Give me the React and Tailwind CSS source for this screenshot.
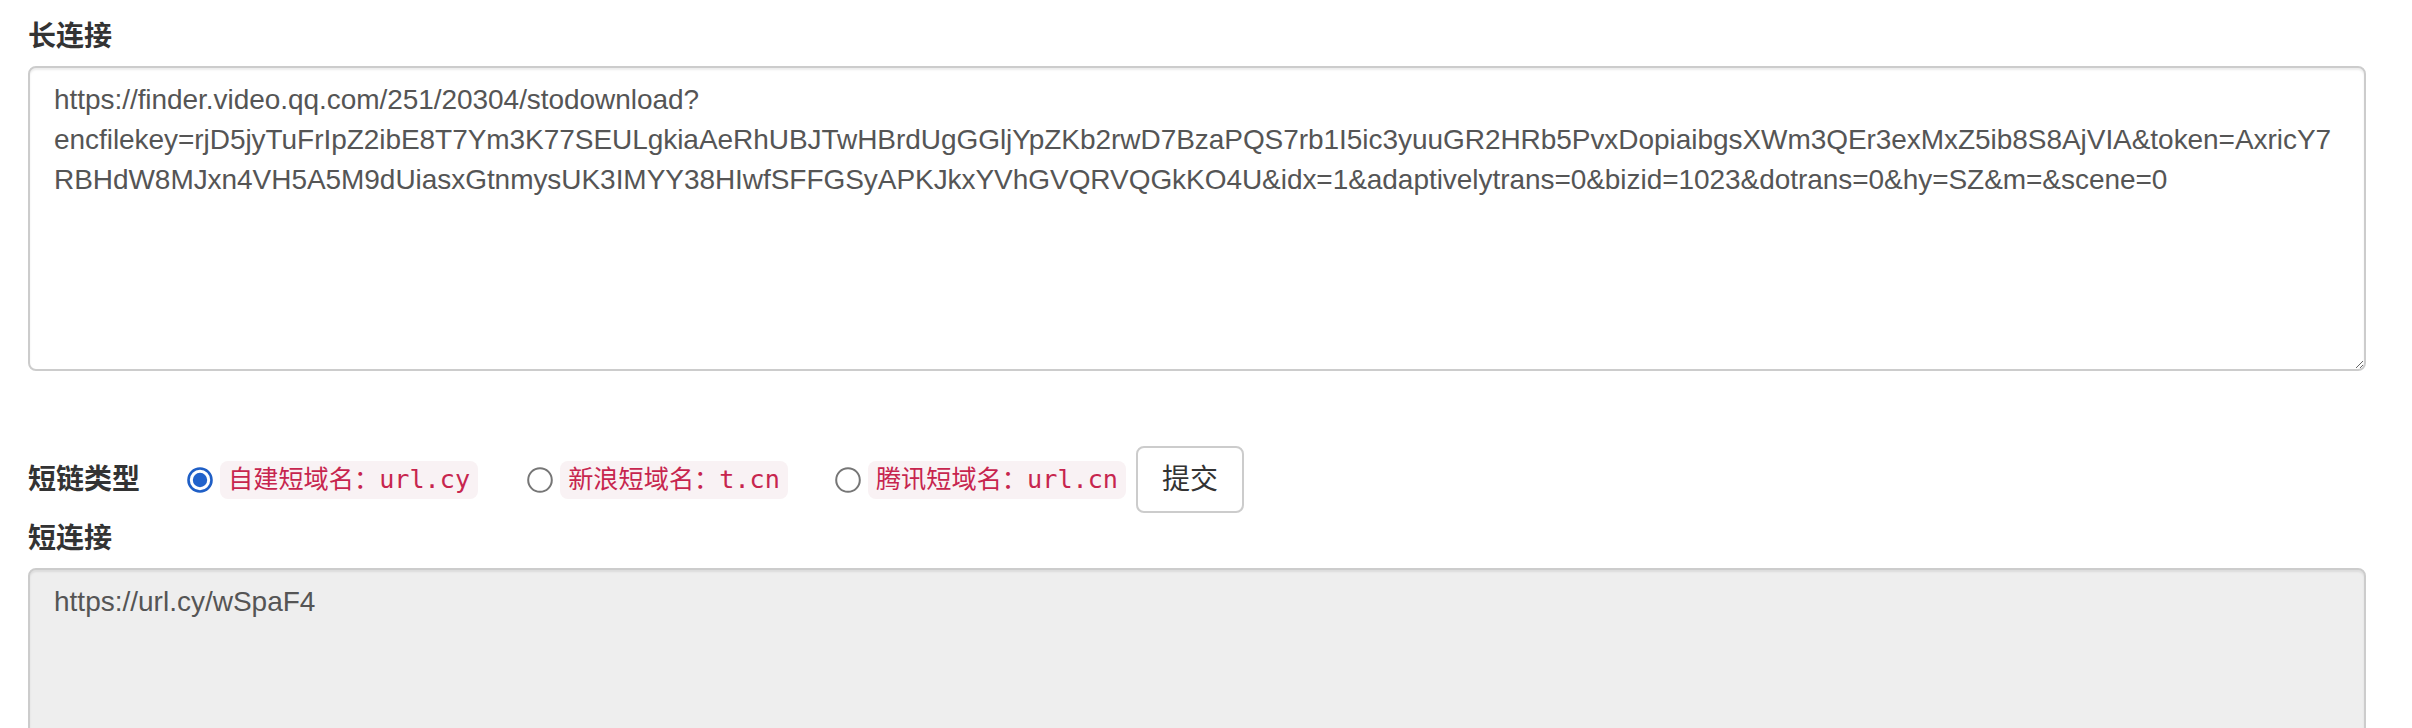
import React from "react";

const LONG_URL =
  "https://finder.video.qq.com/251/20304/stodownload?\n" +
  "encfilekey=rjD5jyTuFrIpZ2ibE8T7Ym3K77SEULgkiaAeRhUBJTwHBrdUgGGljYpZKb2rwD7BzaPQS7rb1I5ic3yuuGR2HRb5PvxDopiaibgsXWm3QEr3exMxZ5ib8S8AjVIA&token=AxricY7\n" +
  "RBHdW8MJxn4VH5A5M9dUiasxGtnmysUK3IMYY38HIwfSFFGSyAPKJkxYVhGVQRVQGkKO4U&idx=1&adaptivelytrans=0&bizid=1023&dotrans=0&hy=SZ&m=&scene=0";

function Radio({ checked }) {
  return (
    <svg width="26" height="26" viewBox="0 0 26 26" className="shrink-0">
      {checked ? (
        <>
          <circle cx="13" cy="13" r="11.5" fill="#fff" stroke="#1f5fc6" strokeWidth="2.6" />
          <circle cx="13" cy="13" r="7.2" fill="#2162cb" />
        </>
      ) : (
        <circle cx="13" cy="13" r="11.8" fill="#fff" stroke="#767676" strokeWidth="2" />
      )}
    </svg>
  );
}

function Code({ children }) {
  return (
    <span
      className="px-[8px] py-[4px] leading-[30px] text-[25.2px] text-[#c7254e] bg-[#f9f2f4] rounded-[8px] whitespace-nowrap"
      style={{ fontFamily: '"DejaVu Sans Mono", "Noto Sans CJK SC", monospace' }}
    >
      {children}
    </span>
  );
}

export default function App() {
  return (
    <div
      className="bg-white min-h-[728px] pl-[28px] pr-[46px] pt-[17px] text-[28px] leading-[40px] text-[#333]"
      style={{ fontFamily: '"Liberation Sans", "Noto Sans CJK SC", sans-serif' }}
    >
      <div className="font-bold h-[40px] mb-[9px]">长连接</div>
      <textarea
        readOnly
        value={LONG_URL}
        className="block w-full h-[305px] border-2 border-[#ccc] rounded-[8px] px-[24px] py-[12px] text-[28px] leading-[40px] tracking-[-0.05px] text-[#555] bg-white whitespace-pre overflow-hidden shadow-[inset_0_2px_2px_rgba(0,0,0,0.075)] outline-none"
        style={{ fontFamily: '"Liberation Sans", "Noto Sans CJK SC", sans-serif' }}
      />

      <div className="flex items-center h-[67px] mt-[75px]">
        <div className="font-bold w-[112px] shrink-0">短链类型</div>
        <div className="flex items-center ml-[47px]">
          <Radio checked />
          <span className="ml-[7px] flex"><Code>自建短域名：url.cy</Code></span>
        </div>
        <div className="flex items-center ml-[49px]">
          <Radio />
          <span className="ml-[7px] flex"><Code>新浪短域名：t.cn</Code></span>
        </div>
        <div className="flex items-center ml-[47px]">
          <Radio />
          <span className="ml-[7px] flex"><Code>腾讯短域名：url.cn</Code></span>
        </div>
        <button className="ml-[10px] h-[67px] px-[24px] border-2 border-[#ccc] rounded-[8px] bg-white text-[28px] text-[#333] leading-[40px]">
          提交
        </button>
      </div>

      <div className="font-bold h-[40px] mt-[6px] mb-[9px]">短连接</div>
      <textarea
        readOnly
        value="https://url.cy/wSpaF4"
        className="block w-full h-[305px] border-2 border-[#ccc] rounded-[8px] px-[24px] py-[12px] text-[28px] leading-[40px] text-[#555] bg-[#eee] overflow-hidden shadow-[inset_0_2px_2px_rgba(0,0,0,0.075)] outline-none resize-none"
        style={{ fontFamily: '"Liberation Sans", "Noto Sans CJK SC", sans-serif' }}
      />
    </div>
  );
}
